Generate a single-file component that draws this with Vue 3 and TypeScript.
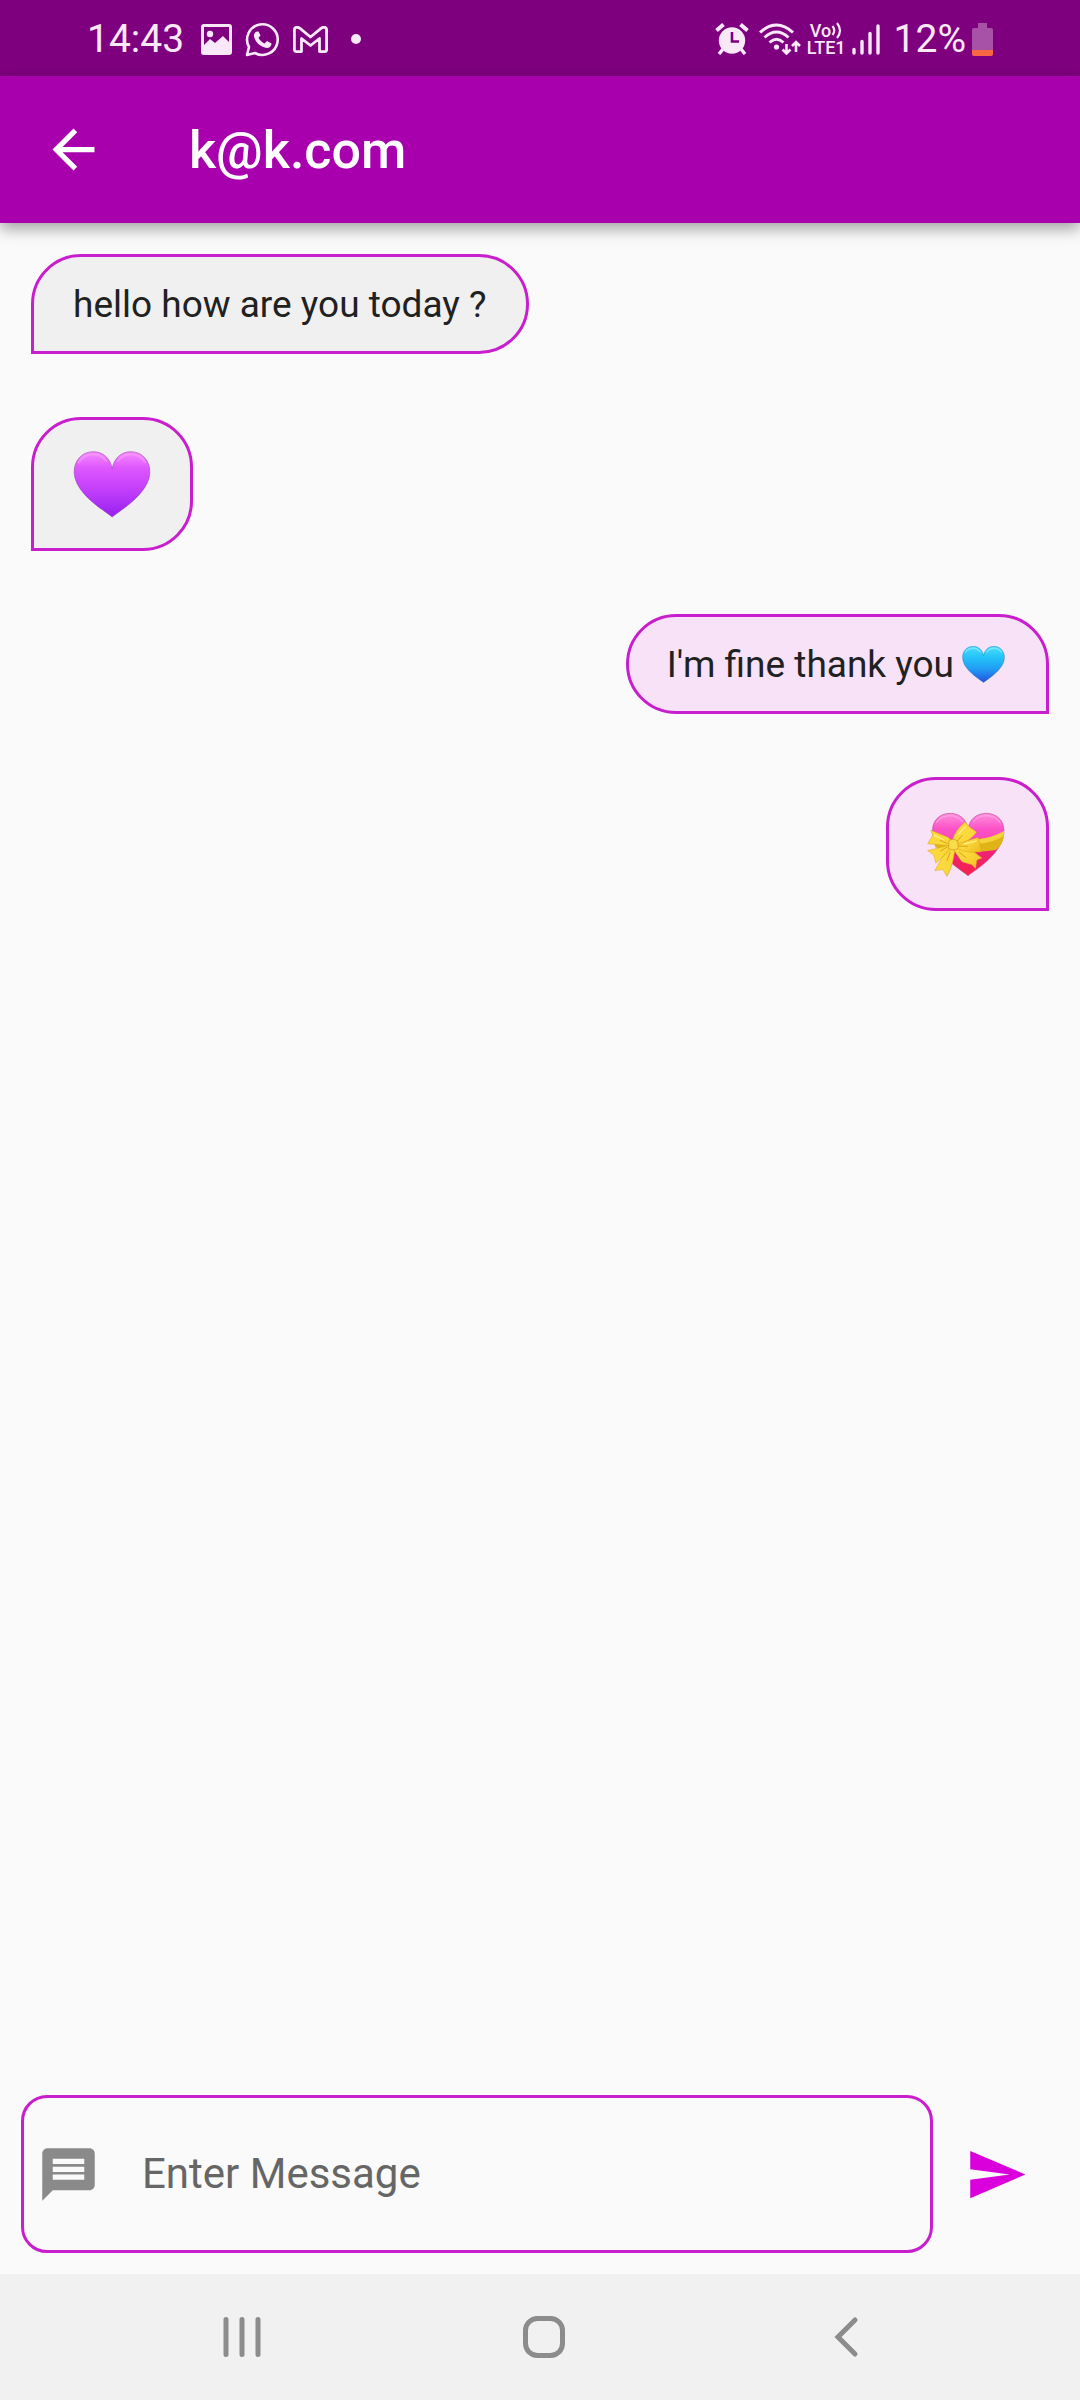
<script setup lang="ts">
import { ref } from 'vue'

type Emoji = 'purple-heart' | 'blue-heart' | 'gift-heart'

interface Message {
  id: number
  mine: boolean
  text?: string
  emoji?: Emoji
}

const contact = 'k@k.com'
const draft = ref('')

const messages = ref<Message[]>([
  { id: 1, mine: false, text: 'hello how are you today ?' },
  { id: 2, mine: false, emoji: 'purple-heart' },
  { id: 3, mine: true, text: "I'm fine thank you", emoji: 'blue-heart' },
  { id: 4, mine: true, emoji: 'gift-heart' },
])

function send(): void {
  const text = draft.value.trim()
  if (!text) return
  messages.value.push({ id: messages.value.length + 1, mine: true, text })
  draft.value = ''
}
</script>

<template>
  <div class="screen">
    <div class="status">
      <div class="status-group">
        <span class="clock">14:43</span>
        <svg class="s-image" viewBox="0 0 31 31" aria-hidden="true">
          <path fill="currentColor" fill-rule="evenodd" d="M3 0H28Q31 0 31 3V28Q31 31 28 31H3Q0 31 0 28V3Q0 0 3 0ZM3 3V21L9 15L14 19L22 12L28 18V3Z" />
          <circle cx="9" cy="10" r="3.2" fill="currentColor" />
        </svg>
        <svg class="s-chat" viewBox="0 0 35 35" aria-hidden="true">
          <path fill="none" stroke="currentColor" stroke-width="2.6" stroke-linejoin="round" d="M2 33L4 25A15.3 15.3 0 1 1 10 31Z" />
          <path fill="currentColor" d="M12 9.500C10 10 8.500 12 9 14.500C10 20 16 25.500 22 26C24.500 26 26.500 24 26.500 21.500L22 19L19.500 21.500C17 20.500 14.500 18 13.500 15.800L15.500 13.500L13.500 9.500Z" />
        </svg>
        <svg class="s-mail" viewBox="0 0 35 27" aria-hidden="true">
          <path fill="none" stroke="currentColor" stroke-width="2.800" stroke-linejoin="round" d="M1.400 4C1.400 1 4.500 .5 7 2.300L17.500 11L28 2.300C30.500 .5 33.600 1 33.600 4V23.500Q33.600 25.600 31.500 25.600H26.500V12.500L17.500 19.500L8.500 12.500V25.600H3.500Q1.400 25.600 1.400 23.500Z" />
        </svg>
        <span class="dot"></span>
      </div>
      <div class="status-group right">
        <svg class="s-alarm" viewBox="0 0 34 32" aria-hidden="true">
          <path stroke="currentColor" stroke-width="4" d="M1.500 7.500L8.500 1.500M32.500 7.500L25.500 1.500" />
          <path stroke="currentColor" stroke-width="3.500" d="M8 26L4 31M26 26L30 31" />
          <circle cx="17" cy="17.500" r="13.200" fill="currentColor" />
          <path fill="none" stroke="#7e007e" stroke-width="2.600" d="M17 9V18.500H24" />
        </svg>
        <svg class="s-wifi" viewBox="0 0 42 32" aria-hidden="true">
          <path fill="none" stroke="currentColor" stroke-width="3" d="M1 9.500Q17.500-5.500 34 9.500M5.500 14.500Q17.500 3.500 29.500 14.500M10.500 19.500Q17.500 13 24.500 19.500" />
          <circle cx="17.500" cy="24" r="2.600" fill="currentColor" />
          <path fill="none" stroke="currentColor" stroke-width="2.600" d="M27.500 21V30M23.500 26.500L27.500 30.500L31.500 26.500M37 29V19.500M33 23L37 19L41 23" />
        </svg>
        <div class="volte">
          <span class="vo">Vo<svg viewBox="0 0 12 17" aria-hidden="true"><path fill="none" stroke="currentColor" stroke-width="2.200" d="M1.500 4Q5 8.500 1.500 13M6 1Q12 8.500 6 16" /></svg></span>
          <span>LTE1</span>
        </div>
        <svg class="s-bars" viewBox="0 0 28 31" aria-hidden="true">
          <path stroke="currentColor" stroke-width="3.400" stroke-linecap="round" d="M2 25.500V29M10 17.500V29M18 9.500V29M26 2V29" />
        </svg>
        <span class="percent">12%</span>
        <svg class="s-battery" viewBox="0 0 21 33" aria-hidden="true">
          <path fill="#a751a7" d="M6 0H15V5H19Q21 5 21 7V27H0V7Q0 5 2 5H6Z" />
          <path fill="#f96845" d="M0 27H21V31Q21 33 19 33H2Q0 33 0 31Z" />
        </svg>
      </div>
    </div>

    <header class="app-bar">
      <button class="icon-button" type="button" aria-label="Back">
        <svg class="icon" viewBox="0 0 24 24"><path fill="currentColor" d="M20 11H7.830l5.590-5.590L12 4l-8 8 8 8 1.410-1.410L7.830 13H20z" /></svg>
      </button>
      <h1>{{ contact }}</h1>
    </header>

    <main class="messages">
      <div
        v-for="message in messages"
        :key="message.id"
        class="bubble"
        :class="{ mine: message.mine, large: !message.text }"
      >
        <span v-if="message.text">{{ message.text }}</span>
        <svg v-if="message.emoji === 'purple-heart'" class="emoji" viewBox="-2 -2 231 201" role="img" aria-label="Purple heart">
          <defs>
            <linearGradient id="purple" x1="0" y1="0" x2="0" y2="1">
              <stop offset="0" stop-color="#f68aff" />
              <stop offset=".25" stop-color="#de57fd" />
              <stop offset=".6" stop-color="#c13efb" />
              <stop offset="1" stop-color="#9620f0" />
            </linearGradient>
          </defs>
          <path fill="url(#purple)" stroke="#9a45b8" stroke-opacity=".6" stroke-width="3" d="M114 196C90 176 0 125 0 60C0 25 25 0 57 0C88 0 110 22 114 52C118 22 140 0 170 0C202 0 227 25 227 60C227 125 138 176 114 196Z" />
          <path fill="none" stroke="#fbb0ff" stroke-opacity=".4" stroke-width="6" stroke-linecap="round" d="M14 32Q28 8 58 8Q82 9 96 28M131 28Q145 9 170 8Q199 8 213 32" />
        </svg>
        <svg v-else-if="message.emoji === 'blue-heart'" class="emoji" viewBox="-2 -2 231 201" role="img" aria-label="Blue heart">
          <defs>
            <linearGradient id="blue" x1="0" y1="0" x2="0" y2="1">
              <stop offset="0" stop-color="#4cdcfa" />
              <stop offset=".3" stop-color="#24c4f8" />
              <stop offset=".65" stop-color="#2199f4" />
              <stop offset="1" stop-color="#2350dc" />
            </linearGradient>
          </defs>
          <path fill="url(#blue)" stroke="#2878bd" stroke-opacity=".6" stroke-width="4" d="M114 196C90 176 0 125 0 60C0 25 25 0 57 0C88 0 110 22 114 52C118 22 140 0 170 0C202 0 227 25 227 60C227 125 138 176 114 196Z" />
          <path fill="none" stroke="#a6f3ff" stroke-opacity=".5" stroke-width="8" stroke-linecap="round" d="M16 32Q28 10 58 10Q82 11 96 30M131 30Q145 11 170 10Q199 10 211 32" />
        </svg>
        <svg v-else-if="message.emoji === 'gift-heart'" class="emoji" viewBox="175 152 230 194" role="img" aria-label="Heart with ribbon">
          <defs>
            <linearGradient id="gift" x1="0" y1="0" x2="0" y2="1">
              <stop offset="0" stop-color="#ff8fdc" />
              <stop offset=".25" stop-color="#fb52c8" />
              <stop offset=".45" stop-color="#fb45b8" />
              <stop offset=".62" stop-color="#ee2277" />
              <stop offset="1" stop-color="#f52348" />
            </linearGradient>
            <linearGradient id="gold" x1="0" y1="0" x2="1" y2="1">
              <stop offset="0" stop-color="#fbd83c" />
              <stop offset=".6" stop-color="#fbd93c" />
              <stop offset="1" stop-color="#ecb81c" />
            </linearGradient>
          </defs>
          <path fill="url(#gift)" stroke="#b03a86" stroke-opacity=".6" stroke-width="2.500" d="M296 341C272 322 191 274 191 208C191 178 213 157 243 157C270 157 292 174 296 203C300 174 322 157 350 157C380 157 402 178 402 208C402 274 320 322 296 341Z" />
          <path fill="none" stroke="#ffc2ec" stroke-opacity=".5" stroke-width="4" stroke-linecap="round" d="M204 184Q217 164 243 164Q265 164 279 181M313 181Q326 164 350 164Q376 164 390 184" />
          <path fill="#e0b416" d="M190 226Q260 248 322 234Q370 229 402 209L399 237Q390 257 378 265Q300 278 200 258Z" />
          <path fill="#f5d33a" d="M322 234Q370 229 402 209L401 224Q370 244 324 247Z" />
          <path fill="url(#gold)" stroke="#d9a41c" stroke-width="1.500" stroke-linejoin="round" d="M242 258L218 290L198 326L222 323L234 343Q247 323 252 294L258 262ZM250 260L278 300L308 309L318 320L322 295L337 289L312 270L268 248ZM252 244L238 228L186 207L192 222L177 247L236 252ZM238 252L177 267L195 280L201 304L246 262Z" />
          <path fill="url(#gold)" stroke="#d9a41c" stroke-width="1.500" stroke-linejoin="round" d="M248 243Q256 207 288 183L301 198L321 212Q306 236 264 253ZM264 247L326 228L331 249L336 270Q295 277 262 260Z" />
          <path fill="#f9dc4a" stroke="#cf9717" stroke-width="2" d="M239 239Q252 228 266 240L267 260Q252 270 239 260Z" />
          <path fill="none" stroke="#cf9a18" stroke-width="2.500" stroke-linecap="round" d="M264 239L279 222M270 254L294 254M235 246L214 237M234 257L215 268M243 272L234 297M270 271L290 288" />
          <path fill="none" stroke="#fff08a" stroke-width="4" stroke-linecap="round" d="M268 218L288 197M285 247L320 239M197 222L224 235" />
        </svg>
      </div>
    </main>

    <form class="composer" @submit.prevent="send">
      <div class="field">
        <label for="message-input" aria-label="Message">
          <svg class="icon" viewBox="0 0 24 24" aria-hidden="true"><path fill="currentColor" d="M20 2H4c-1.100 0-1.990.900-1.990 2L2 22l4-4h14c1.100 0 2-.9 2-2V4c0-1.100-.9-2-2-2zM18 14H6v-2h12v2zm0-3H6V9h12v2zm0-3H6V6h12v2z" /></svg>
        </label>
        <input id="message-input" v-model="draft" type="text" placeholder="Enter Message" autocomplete="off" />
      </div>
      <button class="icon-button send" type="submit" aria-label="Send">
        <svg class="icon" viewBox="0 0 24 24"><path fill="currentColor" d="M2 3V10L17 12L2 14V21L23 12Z" /></svg>
      </button>
    </form>

    <nav class="nav-bar">
      <button type="button" aria-label="Recent apps">
        <svg viewBox="0 0 44 44"><path stroke="currentColor" stroke-width="5" stroke-linecap="round" d="M6 4.500V39.500M22 4.500V39.500M38 4.500V39.500" /></svg>
      </button>
      <button type="button" aria-label="Home">
        <svg viewBox="0 0 44 44"><rect x="3.500" y="3.500" width="37" height="37" rx="12" fill="none" stroke="currentColor" stroke-width="5" /></svg>
      </button>
      <button type="button" aria-label="Back">
        <svg viewBox="0 0 44 44"><path fill="none" stroke="currentColor" stroke-width="5" stroke-linecap="round" d="M31 5L14 22L31 39" /></svg>
      </button>
    </nav>
  </div>
</template>

<style>
body {
  margin: 0;
  background: #fafafa;
}
</style>

<style scoped>
.screen {
  display: flex;
  flex-direction: column;
  min-height: 100vh;
  background: #fafafa;
  color: #212121;
  font-family: Roboto, "Noto Sans", sans-serif;
}

svg {
  display: block;
  flex: none;
}

button {
  padding: 0;
  border: 0;
  background: none;
  color: inherit;
  cursor: pointer;
}

.status {
  display: flex;
  justify-content: space-between;
  align-items: center;
  box-sizing: border-box;
  height: 76px;
  padding: 2px 87px 0;
  background: #7e007e;
  color: #f8e8f8;
}

.status-group {
  display: flex;
  align-items: center;
  gap: 13px;
}

.status-group.right {
  gap: 6px;
}

.clock,
.percent {
  font-size: 39px;
  line-height: 44px;
}

.clock {
  margin-right: 4px;
}

.percent {
  margin-left: 8px;
}

.s-image {
  width: 31px;
  height: 31px;
}

.s-chat {
  width: 35px;
  height: 35px;
}

.s-mail {
  width: 35px;
  height: 27px;
}

.dot {
  width: 10px;
  height: 10px;
  margin-left: 10px;
  border-radius: 50%;
  background: currentColor;
}

.s-alarm {
  width: 34px;
  height: 32px;
  margin-right: 4px;
}

.s-wifi {
  width: 42px;
  height: 32px;
}

.volte {
  display: flex;
  flex-direction: column;
  font-size: 18px;
  font-weight: 500;
  line-height: 17px;
}

.vo {
  display: flex;
  padding-left: 3px;
}

.vo svg {
  width: 12px;
  height: 17px;
}

.s-bars {
  width: 28px;
  height: 31px;
}

.s-battery {
  width: 21px;
  height: 33px;
}

.app-bar {
  display: flex;
  align-items: center;
  gap: 84px;
  height: 147px;
  padding: 0 42px;
  background: #a700ac;
  color: #fff;
  box-shadow: 0 6px 14px rgba(0, 0, 0, 0.35);
}

.app-bar h1 {
  margin: 0;
  padding-top: 3px;
  font-size: 52px;
  font-weight: 500;
  line-height: 62px;
}

.icon-button {
  flex: none;
}

.icon {
  width: 63px;
  height: 63px;
}

.messages {
  display: flex;
  flex: 1;
  flex-direction: column;
  align-items: flex-start;
  gap: 63px;
  padding: 31px;
}

.bubble {
  display: flex;
  align-items: center;
  gap: 8px;
  box-sizing: border-box;
  min-height: 100px;
  padding: 25px 39px;
  border: 3px solid #c81ecd;
  border-radius: 50px 50px 50px 0;
  background: #f0f0f0;
  font-size: 37px;
  line-height: 43px;
}

.bubble.mine {
  align-self: flex-end;
  padding: 25px 41px 25px 38px;
  border-radius: 50px 50px 0 50px;
  background: #f7e2f7;
}

.bubble .emoji {
  width: 43px;
  height: 37px;
}

.bubble.large {
  min-height: 134px;
}

.bubble.large .emoji {
  width: 78px;
  height: 67px;
}

.composer {
  display: flex;
  align-items: center;
  gap: 32px;
  padding: 0 52px 21px 21px;
}

.field {
  display: flex;
  flex: 1;
  align-items: center;
  gap: 42px;
  box-sizing: border-box;
  min-height: 158px;
  padding: 0 13px;
  border: 3px solid #c81ecd;
  border-radius: 26px;
  color: #8a8a8a;
}

.field input {
  flex: 1;
  min-width: 0;
  padding: 0;
  border: 0;
  outline: 0;
  background: none;
  color: #212121;
  font: inherit;
  font-size: 42px;
  line-height: 50px;
}

.field input::placeholder {
  color: #666;
  opacity: 1;
}

.send {
  color: #d900dc;
}

.nav-bar {
  display: flex;
  height: 126px;
  padding: 0 83px 0 91px;
  background: #f1f1f1;
  color: #8c8c8c;
}

.nav-bar button {
  display: flex;
  flex: 1;
  align-items: center;
  justify-content: center;
}

.nav-bar svg {
  width: 44px;
  height: 44px;
}
</style>
